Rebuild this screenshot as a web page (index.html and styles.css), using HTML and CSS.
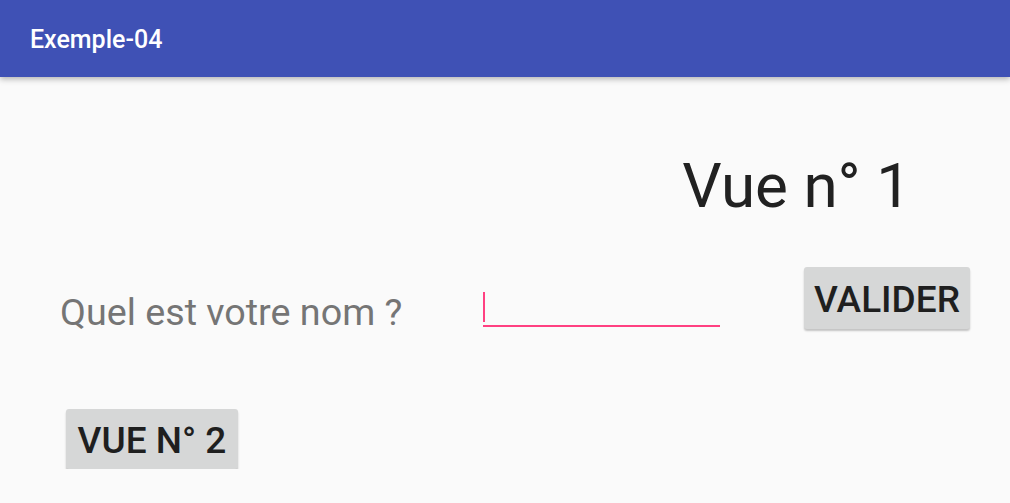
FILE: index.html
```html
<!DOCTYPE html>
<html lang="fr">

<head>
    <meta charset="UTF-8">
    <meta name="viewport" content="width=device-width, initial-scale=1.0">
    <title>Exemple-04</title>
    <link rel="stylesheet" href="styles.css">
</head>

<body>
    <header class="app-bar">
        <span class="app-title">Exemple-04</span>
    </header>

    <main class="content">
        <div class="title-row">
            <h1 class="view-title">Vue n° 1</h1>
        </div>

        <div class="form-row">
            <label class="name-label" for="nameField">Quel est votre nom ?</label>
            <div class="edit-field" id="nameField"><span class="caret"></span></div>
            <button class="btn btn-validate">VALIDER</button>
        </div>

        <div class="nav-row">
            <button class="btn btn-next">VUE N° 2</button>
        </div>
    </main>
</body>

</html>
```

FILE: styles.css
```css
body {
    margin: 0;
    background-color: #fafafa;
    font-family: Roboto, "Liberation Sans", sans-serif;
    color: #212121;
}

.app-bar {
    box-sizing: border-box;
    height: 77px;
    padding: 27px 0 0 30px;
    background-color: #3f51b5;
    box-shadow: 0 2px 6px rgba(0, 0, 0, 0.3);
}

.app-title {
    display: block;
    color: #ffffff;
    font-size: 25px;
    font-weight: 500;
    line-height: 1;
}

.content {
    padding: 78px 0 0 0;
}

.title-row {
    display: flex;
    justify-content: flex-end;
    padding-right: 99px;
}

.view-title {
    margin: 0;
    font-size: 62px;
    font-weight: 400;
    line-height: 1;
    color: #212121;
}

.form-row {
    display: flex;
    align-items: flex-start;
    margin-top: 50px;
    padding-left: 60px;
}

.name-label {
    flex: 0 0 343px;
    margin-top: 27px;
    font-size: 37.7px;
    line-height: 1;
    color: #757575;
}

.edit-field {
    box-sizing: border-box;
    width: 237px;
    height: 37px;
    margin: 23px 0 0 80px;
    border-bottom: 2px solid #ff4081;
    padding-top: 2px;
}

.caret {
    display: block;
    width: 2px;
    height: 30px;
    background-color: #ff4081;
}

.btn {
    display: flex;
    align-items: center;
    justify-content: center;
    box-sizing: border-box;
    height: 62px;
    padding: 3px 0 0 0;
    border: none;
    border-radius: 3px;
    background-color: #d6d7d7;
    box-shadow: 0 2px 2px rgba(0, 0, 0, 0.22);
    font-family: Roboto, "Liberation Sans", sans-serif;
    font-size: 37px;
    font-weight: 500;
    line-height: 1;
    color: #1f1f1f;
}

.btn-validate {
    width: 166px;
    margin-left: 84px;
}

.nav-row {
    margin-top: 77px;
    padding-left: 66px;
}

.btn-next {
    width: 172px;
    height: 60px;
}
```
